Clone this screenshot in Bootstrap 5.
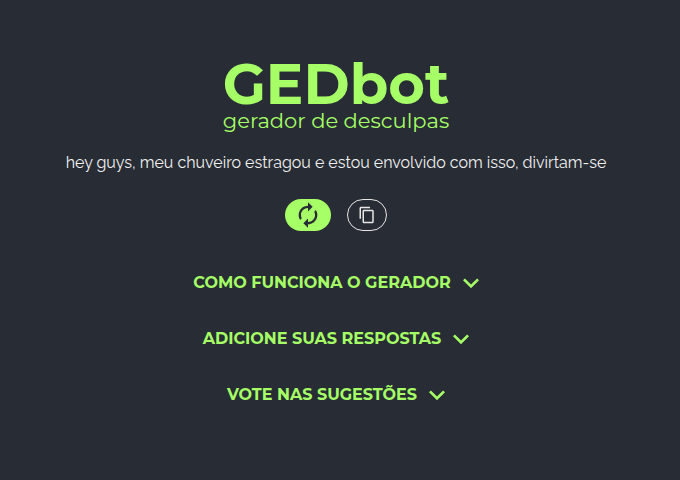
<!DOCTYPE html>
<html lang="pt-BR">
<head>
<meta charset="utf-8">
<meta name="viewport" content="width=device-width, initial-scale=1">
<title>GEDbot - gerador de desculpas</title>
<link href="https://cdn.jsdelivr.net/npm/bootstrap@5.3.0/dist/css/bootstrap.min.css" rel="stylesheet">
<script src="https://cdn.jsdelivr.net/npm/bootstrap@5.3.0/dist/js/bootstrap.bundle.min.js" defer></script>
<style>
body { background: #282c34; color: #f0f0f0; font-family: Montserrat, Inter, sans-serif; }
.page { padding: 60px 8px 56px 0; }
.brand { color: #a6ff66; }
.brand-name { font-size: 56px; line-height: 48px; }
.brand-tagline { font-size: 21px; line-height: 26px; }
.excuse { font-family: Raleway, Lato, sans-serif; font-size: 16px; line-height: 24px; margin-top: 17px; }
.actions { gap: 16px; margin-top: 24px; }
.pill { height: 32px; border-radius: 16px; }
.pill-generate { width: 46px; background: #a6ff66; color: #282c34; }
.pill-copy { width: 40px; border: 1px solid #e6e6e6; color: #e6e6e6; }
.sections { gap: 32px; margin-top: 40px; }
.section-toggle { color: #a6ff66; font-size: 16px; line-height: 24px; gap: 12px; }
</style>
</head>
<body>
<main class="page d-flex flex-column align-items-center text-center">
  <header class="brand">
    <h1 class="brand-name fw-bold m-0">GEDbot</h1>
    <p class="brand-tagline m-0">gerador de desculpas</p>
  </header>
  <p class="excuse mb-0">hey guys, meu chuveiro estragou e estou envolvido com isso, divirtam-se</p>
  <div class="actions d-flex">
    <button type="button" class="pill pill-generate btn border-0 p-0 d-flex align-items-center justify-content-center" aria-label="Gerar desculpa">
      <svg width="28" height="28" viewBox="0 0 24 24" fill="currentColor" aria-hidden="true"><path d="M12 6v3l4-4-4-4v3c-4.420 0-8 3.580-8 8 0 1.570.46 3.030 1.240 4.260L6.700 14.800C6.250 13.970 6 13.010 6 12c0-3.310 2.690-6 6-6zm6.760 1.740L17.300 9.200c.44.84.7 1.790.7 2.800 0 3.310-2.690 6-6 6v-3l-4 4 4 4v-3c4.420 0 8-3.580 8-8 0-1.570-.46-3.030-1.240-4.260z"/></svg>
    </button>
    <button type="button" class="pill pill-copy btn p-0 d-flex align-items-center justify-content-center" aria-label="Copiar desculpa">
      <svg width="18" height="18" viewBox="0 0 24 24" fill="currentColor" aria-hidden="true"><path d="M16 1H4c-1.100 0-2 .9-2 2v14h2V3h12V1zm3 4H8c-1.100 0-2 .9-2 2v14c0 1.100.9 2 2 2h11c1.100 0 2-.9 2-2V7c0-1.100-.9-2-2-2zm0 16H8V7h11v14z"/></svg>
    </button>
  </div>
  <div class="sections d-flex flex-column align-items-center">
    <button type="button" class="section-toggle btn border-0 p-0 fw-bold d-flex align-items-center">COMO FUNCIONA O GERADOR
      <svg width="16" height="10" viewBox="0 0 16 10" fill="currentColor" aria-hidden="true"><path d="M0 2.300L1.900.4 8 6.400 14.100.4 16 2.300 8 10.200z"/></svg></button>
    <button type="button" class="section-toggle btn border-0 p-0 fw-bold d-flex align-items-center">ADICIONE SUAS RESPOSTAS
      <svg width="16" height="10" viewBox="0 0 16 10" fill="currentColor" aria-hidden="true"><path d="M0 2.300L1.900.4 8 6.400 14.100.4 16 2.300 8 10.200z"/></svg></button>
    <button type="button" class="section-toggle btn border-0 p-0 fw-bold d-flex align-items-center">VOTE NAS SUGESTÕES
      <svg width="16" height="10" viewBox="0 0 16 10" fill="currentColor" aria-hidden="true"><path d="M0 2.300L1.900.4 8 6.400 14.100.4 16 2.300 8 10.200z"/></svg></button>
  </div>
</main>
</body>
</html>
